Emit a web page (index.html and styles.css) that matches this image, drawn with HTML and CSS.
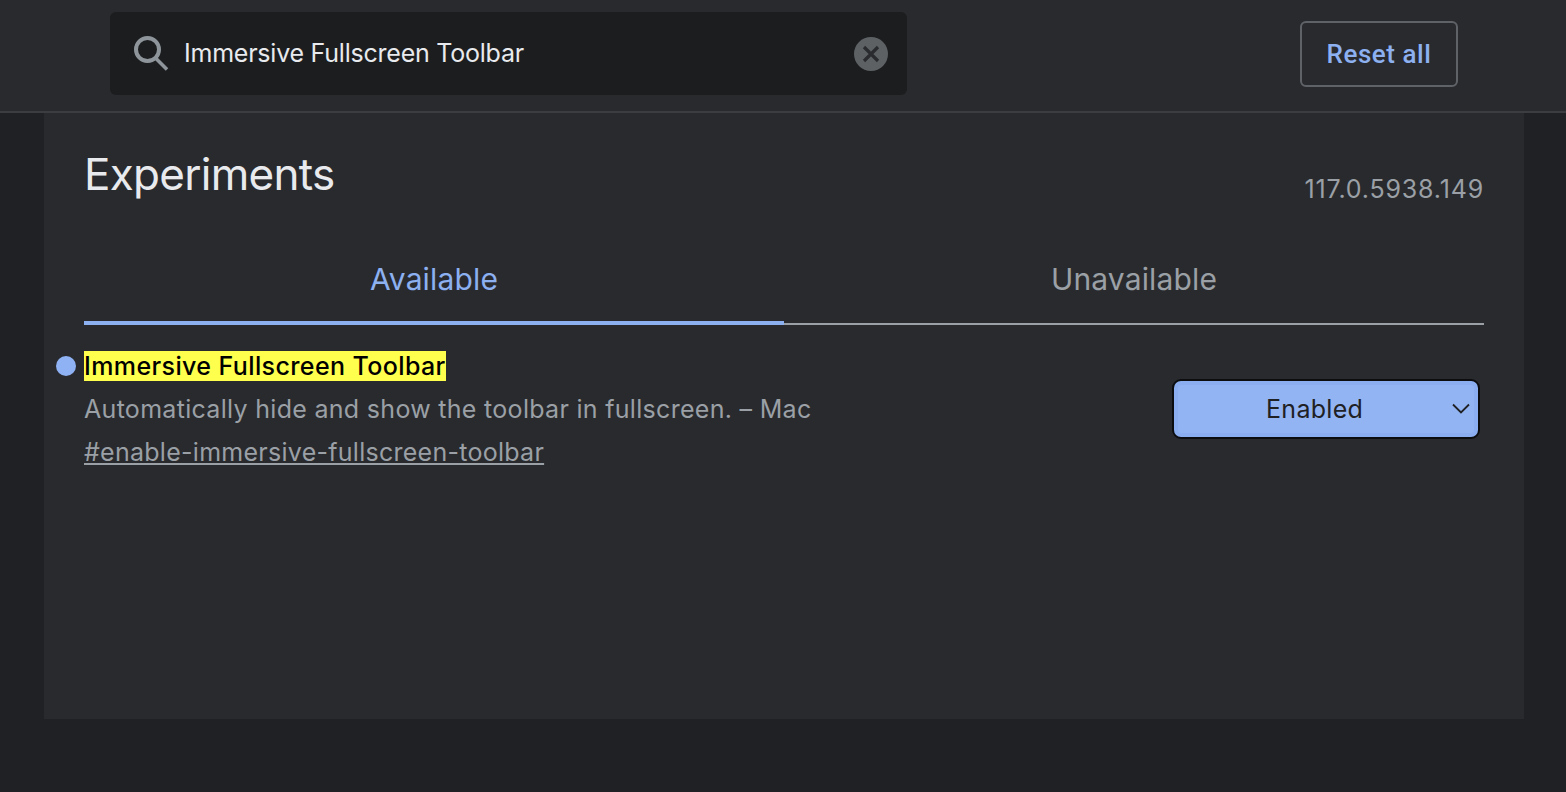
FILE: index.html
```html
<!DOCTYPE html>
<html lang="en">
<head>
<meta charset="utf-8">
<title>Experiments</title>
<link rel="stylesheet" href="styles.css">
</head>
<body>
<header class="header">
  <div class="search">
    <svg class="search-icon" width="36" height="36" viewBox="0 0 36 36"><circle cx="14.5" cy="13.5" r="11.5" fill="none" stroke="#8f969b" stroke-width="4"/><path d="M22.5 22 34 33.5" fill="none" stroke="#8f969b" stroke-width="3.6"/></svg>
    <span class="search-text">Immersive Fullscreen Toolbar</span>
    <svg class="clear-icon" width="34" height="34" viewBox="0 0 34 34"><circle cx="17" cy="17" r="17" fill="#5d6164"/><path d="M10 10 24 24M24 10 10 24" fill="none" stroke="#2a2b2e" stroke-width="3.2"/></svg>
  </div>
  <button class="reset">Reset all</button>
</header>
<main class="card">
  <div class="title-row">
    <h1 class="title">Experiments</h1>
    <span class="version">117.0.5938.149</span>
  </div>
  <nav class="tabs">
    <div class="tab tab-active">Available</div>
    <div class="tab">Unavailable</div>
  </nav>
  <section class="flag">
    <div class="flag-info">
      <div class="flag-name-row"><span class="dot"></span><mark class="flag-name">Immersive Fullscreen Toolbar</mark></div>
      <p class="flag-desc">Automatically hide and show the toolbar in fullscreen. – Mac</p>
      <a class="flag-link">#enable-immersive-fullscreen-toolbar</a>
    </div>
    <div class="select">
      <span class="select-label">Enabled</span>
      <svg class="chevron" width="18" height="11" viewBox="0 0 18 11"><path d="M1 1.5 9 9.5 17 1.5" fill="none" stroke="#202124" stroke-width="1.8"/></svg>
    </div>
  </section>
</main>
</body>
</html>
```
FILE: styles.css
```css
* { box-sizing: border-box; }
html, body { margin: 0; height: 792px; overflow: hidden; }
body { background: #202124; font-family: Inter, "Liberation Sans", sans-serif; }
.header {
  height: 113px;
  background: #292a2d;
  border-bottom: 2px solid #3c3d40;
  padding: 12px 108px 0 110px;
  display: flex;
  justify-content: space-between;
  align-items: flex-start;
}
.search {
  width: 797px;
  height: 83px;
  background: #1c1d1f;
  border-radius: 6px;
  display: flex;
  align-items: center;
  padding: 0 19px 0 23px;
}
.search-icon { flex: none; margin-right: 15px; }
.search-text { flex: 1; color: #e8eaed; font-size: 25px; letter-spacing: -0.23px; margin-top: -2px; }
.clear-icon { flex: none; }
.reset {
  width: 158px;
  height: 66px;
  margin-top: 9px;
  background: transparent;
  border: 2px solid #5f6368;
  border-radius: 6px;
  color: #8cb0f0;
  font: 500 26px Roboto, sans-serif;
  letter-spacing: 0.55px;
  padding: 0;
}
.card {
  margin: 0 42px 0 44px;
  height: 606px;
  background: #292a2d;
  padding: 0 40px;
}
.title-row {
  height: 108px;
  display: flex;
  justify-content: space-between;
  align-items: flex-start;
}
.title { margin: 34px 0 0; font-size: 44px; line-height: 54px; font-weight: 400; color: #e8eaed; letter-spacing: -0.72px; }
.version { margin-top: 59px; font-size: 25px; line-height: 34px; color: #9aa0a6; letter-spacing: 0.83px; }
.tabs { display: flex; height: 104px; align-items: stretch; }
.tab {
  flex: 1;
  height: 104px;
  padding-top: 38px;
  text-align: center;
  font-size: 30px;
  line-height: 40px;
  color: #9aa0a6;
  border-bottom: 2px solid #9aa0a6;
  letter-spacing: 0.15px;
}
.tab-active { color: #8cb0f0; border-bottom: 4px solid #8cb0f0; }
.flag {
  display: flex;
  justify-content: space-between;
  align-items: flex-start;
  padding: 26px 4px 0 0;
}
.flag-name-row { position: relative; height: 28px; display: flex; }
.dot {
  position: absolute;
  left: -28px;
  top: 5px;
  width: 20px;
  height: 20px;
  border-radius: 50%;
  background: #8fb2f5;
}
.flag-name { background: #ffff4d; color: #000; font-size: 25px; line-height: 30px; height: 30px; font-weight: 500; letter-spacing: 0.39px; }
.flag-desc { margin: 15px 0 0; font-size: 25px; line-height: 30px; color: #9aa0a6; letter-spacing: 0.3px; }
.flag-link { display: block; margin-top: 13px; font-size: 25px; line-height: 30px; color: #9aa0a6; text-decoration: underline; letter-spacing: 0.27px; }
.select {
  position: relative;
  width: 308px;
  height: 60px;
  margin-top: 28px;
  background: #93b4f3;
  border: 2px solid #0c0d0f;
  border-radius: 9px;
  box-shadow: inset 0 0 0 4px #8aaeef;
  display: flex;
  align-items: center;
  padding-left: 92px;
  color: #202124;
  font-size: 25px;
}
.select-label { letter-spacing: 0.3px; }
.chevron { position: absolute; right: 8px; top: 22px; }
```
